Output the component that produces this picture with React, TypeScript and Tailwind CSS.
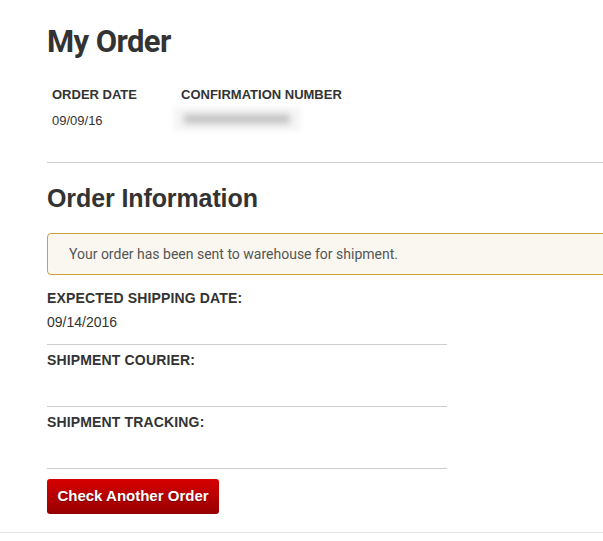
import React from "react";

function Field({ label, value, border }: { label: string; value?: string; border?: boolean }) {
  return (
    <div className={`${border ? "border-t border-[#cccccc] pt-[5px]" : ""} pb-[12px]`}>
      <div className="text-[14px] leading-[20px] font-bold text-[#333333] tracking-[0.15px]">{label}</div>
      <div className="mt-[4px] text-[14px] leading-[20px] text-[#333333] h-[20px]">{value}</div>
    </div>
  );
}

export default function App() {
  return (
    <div className="w-[603px] h-[541px] overflow-hidden bg-white" style={{ fontFamily: '"Liberation Sans", Arial, sans-serif' }}>
      <div className="pl-[47px] pt-[24px]">
        <h1
          className="text-[31px] leading-[36px] font-bold text-[#333333] tracking-[-0.6px]"
          style={{ fontFamily: 'Roboto, "Liberation Sans", sans-serif' }}
        >
          My Order
        </h1>
        <div className="flex pl-[5px] mt-[26px]">
          <div className="w-[129px]">
            <div className="text-[13px] leading-[18px] font-bold text-[#333333]">ORDER DATE</div>
            <div className="mt-[8px] text-[13px] leading-[18px] text-[#333333]">09/09/16</div>
          </div>
          <div>
            <div className="text-[13px] leading-[18px] font-bold text-[#333333]">CONFIRMATION NUMBER</div>
            <div className="mt-[3px] relative h-[24px] w-[128px] -ml-[8px]">
              <div className="absolute inset-0 bg-[#f6f6f6] blur-[2px]" />
              <div className="absolute left-[10px] right-[10px] top-[7px] h-[10px] bg-[#c6c6c6] rounded-full blur-[3px]" />
            </div>
          </div>
        </div>
        <div className="mt-[31px] border-t border-[#cccccc] w-[600px]" />
        <h2 className="mt-[20px] text-[25px] leading-[30px] font-bold text-[#333333] tracking-[-0.1px]">
          Order Information
        </h2>
        <div
          className="mt-[20px] w-[600px] h-[42px] border border-[#c9a23c] rounded-[4px] bg-[#faf7f0] flex items-center pl-[21px] text-[14px] text-[#555555]"
          style={{ fontFamily: 'Roboto, "Liberation Sans", sans-serif' }}
        >
          Your order has been sent to warehouse for shipment.
        </div>
        <div className="w-[400px] mt-[13px]">
          <Field label="EXPECTED SHIPPING DATE:" value="09/14/2016" />
          <Field label="SHIPMENT COURIER:" border />
          <Field label="SHIPMENT TRACKING:" border />
          <div className="border-t border-[#cccccc] pt-[10px]">
            <button
              className="w-[172px] h-[35px] rounded-[3px] bg-gradient-to-b from-[#d80000] to-[#960000] text-white text-[15px] font-bold"
              style={{ textShadow: "0 1px 1px rgba(0,0,0,0.35)" }}
            >
              Check Another Order
            </button>
          </div>
        </div>
      </div>
      <div className="mt-[18px] border-t border-[#e5e5e5]" />
    </div>
  );
}
